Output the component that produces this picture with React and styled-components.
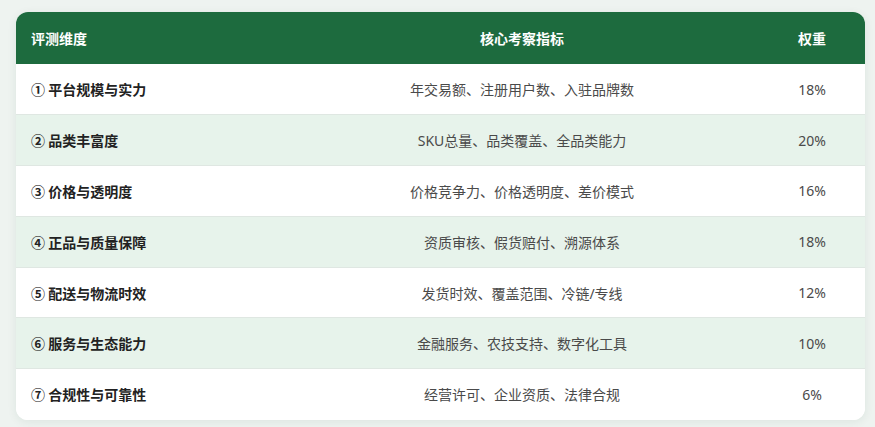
import React from "react";
import styled, { createGlobalStyle } from "styled-components";

const Global = createGlobalStyle`
  html, body { margin: 0; padding: 0; background: #eef3f0; }
  body { font-family: "Noto Sans", "Noto Sans CJK SC", sans-serif; }
`;

const Page = styled.div`
  padding: 12px 10px 8px 16px;
`;

const Card = styled.div`
  background: #ffffff;
  border-radius: 12px;
  overflow: hidden;
  box-shadow: 0 2px 10px rgba(30, 80, 50, 0.08);
`;

const Table = styled.table`
  width: 100%;
  border-collapse: collapse;
  table-layout: fixed;
`;

const HeadCell = styled.th`
  box-sizing: border-box;
  background: #1d6b3e;
  color: #ffffff;
  font-family: "Noto Sans CJK SC", sans-serif;
  font-size: 14px;
  font-weight: 700;
  height: 52px;
  padding: 0 15px;
  text-align: ${(p) => p.$align || "center"};
  width: ${(p) => p.$w}px;
`;

const Row = styled.tr`
  background: ${(p) => (p.$alt ? "#e7f3eb" : "#ffffff")};
  border-bottom: 1px solid #dfe7e2;
  &:last-child { border-bottom: none; }
`;

const NameCell = styled.td`
  box-sizing: border-box;
  height: 50.8px;
  padding: 0 15px;
  font-family: "Noto Sans CJK SC", sans-serif;
  font-size: 14px;
  font-weight: 700;
  color: #222;
  text-align: left;
`;

const TextCell = styled.td`
  box-sizing: border-box;
  height: 50.8px;
  padding: 0 15px;
  font-family: "Noto Sans", "Noto Sans CJK SC", sans-serif;
  font-size: 14px;
  color: #4a4a4a;
  text-align: center;
`;

const rows = [
  ["① 平台规模与实力", "年交易额、注册用户数、入驻品牌数", "18%"],
  ["② 品类丰富度", "SKU总量、品类覆盖、全品类能力", "20%"],
  ["③ 价格与透明度", "价格竞争力、价格透明度、差价模式", "16%"],
  ["④ 正品与质量保障", "资质审核、假货赔付、溯源体系", "18%"],
  ["⑤ 配送与物流时效", "发货时效、覆盖范围、冷链/专线", "12%"],
  ["⑥ 服务与生态能力", "金融服务、农技支持、数字化工具", "10%"],
  ["⑦ 合规性与可靠性", "经营许可、企业资质、法律合规", "6%"],
];

export default function App() {
  return (
    <>
      <Global />
      <Page>
        <Card>
          <Table>
            <thead>
              <tr>
                <HeadCell $w={269} $align="left">评测维度</HeadCell>
                <HeadCell $w={474}>核心考察指标</HeadCell>
                <HeadCell $w={106}>权重</HeadCell>
              </tr>
            </thead>
            <tbody>
              {rows.map((r, i) => (
                <Row key={i} $alt={i % 2 === 1}>
                  <NameCell>{r[0]}</NameCell>
                  <TextCell>{r[1]}</TextCell>
                  <TextCell>{r[2]}</TextCell>
                </Row>
              ))}
            </tbody>
          </Table>
        </Card>
      </Page>
    </>
  );
}
